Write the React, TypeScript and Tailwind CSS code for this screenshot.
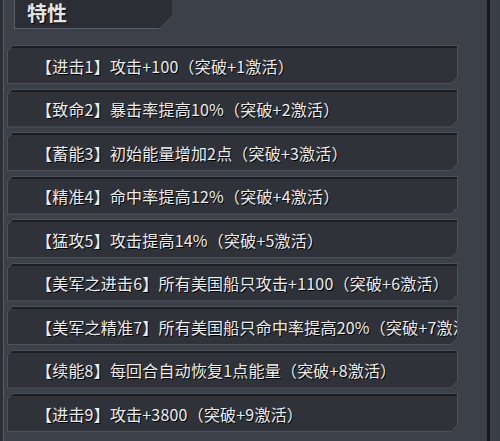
const traits = [
  '【进击1】攻击+100（突破+1激活）',
  '【致命2】暴击率提高10%（突破+2激活）',
  '【蓄能3】初始能量增加2点（突破+3激活）',
  '【精准4】命中率提高12%（突破+4激活）',
  '【猛攻5】攻击提高14%（突破+5激活）',
  '【美军之进击6】所有美国船只攻击+1100（突破+6激活）',
  '【美军之精准7】所有美国船只命中率提高20%（突破+7激活）',
  '【续能8】每回合自动恢复1点能量（突破+8激活）',
  '【进击9】攻击+3800（突破+9激活）',
];

function TraitRow({ text }: { text: string }) {
  return (
    <div className="h-[39px] w-[451px] bg-[#4c515a] p-px [clip-path:polygon(6px_0,100%_0,100%_calc(100%-7px),calc(100%-7px)_100%,0_100%,0_6px)]">
      <div className="flex h-full items-center overflow-hidden bg-[#2f3339] pl-[28px] pt-[2px] shadow-[inset_0_2px_0_#1c1e22] [clip-path:polygon(5px_0,100%_0,100%_calc(100%-6px),calc(100%-6px)_100%,0_100%,0_5px)]">
        <span className="whitespace-nowrap text-[16px] leading-none tracking-[0.2px] text-[#ececec] [text-shadow:1px_1px_0_#000]">
          {text}
        </span>
      </div>
    </div>
  );
}

export default function App() {
  return (
    <div className="flex h-[441px] w-[500px] overflow-hidden bg-[#33363d] font-['Noto_Sans_CJK_SC','Noto_Sans',sans-serif]">
      <div className="w-[4px] border-r border-[#565c66] bg-[#2c2f35]" />

      <div className="flex w-[483px] flex-col bg-[#3c4048]">
        {/* header tab */}
        <div className="ml-[10px] h-[29px] w-[158px] bg-[#5a606a] pb-px pl-px [clip-path:polygon(0_0,100%_0,100%_calc(100%-13px),calc(100%-13px)_100%,0_100%)]">
          <div className="h-full bg-[#2b2e34] pl-[12px] pt-[3px] [clip-path:polygon(0_0,100%_0,100%_calc(100%-12px),calc(100%-12px)_100%,0_100%)]">
            <span className="block text-[20px] font-bold leading-none text-[#e4e4e4] [text-shadow:1px_1px_1px_#000]">
              特性
            </span>
          </div>
        </div>

        <div className="ml-[3px] mt-[16px] flex flex-col gap-[4.5px]">
          {traits.map((t) => (
            <TraitRow key={t} text={t} />
          ))}
        </div>
      </div>

      <div className="w-[3px] bg-[#16181b]" />
      <div className="flex-1 bg-[#3a3e46]" />
    </div>
  );
}
